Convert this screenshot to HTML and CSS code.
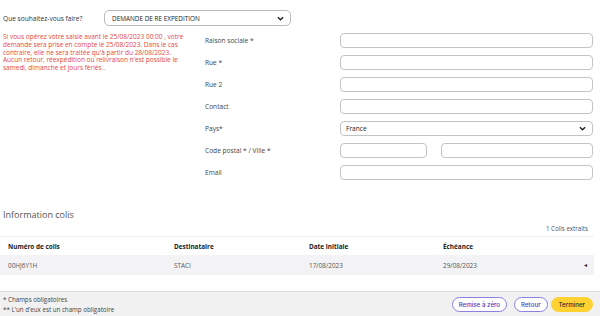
FILE: index.html
```html
<!DOCTYPE html>
<html lang="fr">
<head>
<meta charset="utf-8">
<link rel="stylesheet" href="styles.css">
</head>
<body>
<div class="page">
  <div class="top-row">
    <span class="top-label">Que souhaitez-vous faire?</span>
    <div class="select top-select">
      <span>DEMANDE DE RE EXPEDITION</span>
      <svg class="chev" viewBox="0 0 8 5" width="7" height="5"><polyline points="1,1 4,4 7,1" fill="none" stroke="#222" stroke-width="1.6"/></svg>
    </div>
  </div>
  <div class="main">
    <p class="notice">Si vous opérez votre saisie avant le 25/08/2023 00:00 , votre<br>demande sera prise en compte le 25/08/2023. Dans le cas<br>contraire, elle ne sera traitée qu'à partir du 28/08/2023.<br>Aucun retour, réexpédition ou relivraison n'est possible le<br>samedi, dimanche et jours fériés .</p>
    <div class="form">
      <label class="lbl">Raison sociale *</label><div class="input"></div>
      <label class="lbl">Rue *</label><div class="input"></div>
      <label class="lbl">Rue 2</label><div class="input"></div>
      <label class="lbl">Contact</label><div class="input"></div>
      <label class="lbl">Pays*</label>
      <div class="input select">
        <span>France</span>
        <svg class="chev" viewBox="0 0 8 5" width="7" height="5"><polyline points="1,1 4,4 7,1" fill="none" stroke="#222" stroke-width="1.6"/></svg>
      </div>
      <label class="lbl">Code postal * / Ville *</label>
      <div class="pair"><div class="input cp"></div><div class="input city"></div></div>
      <label class="lbl">Email</label><div class="input"></div>
    </div>
  </div>

  <h2 class="section-title">Information colis</h2>
  <div class="count">1 Colis extraits</div>
  <div class="table">
    <div class="tr th">
      <span>Numéro de colis</span><span>Destinataire</span><span>Date initiale</span><span>Échéance</span><span></span>
    </div>
    <div class="tr td">
      <span>00HJ6Y1H</span><span>STACI</span><span>17/08/2023</span><span>29/08/2023</span><span class="caret">◂</span>
    </div>
  </div>
</div>
<footer class="footer">
  <div class="notes">
    <div>* Champs obligatoires</div>
    <div>** L'un d'eux est un champ obligatoire</div>
  </div>
  <div class="actions">
    <button class="btn outline reset">Remise à zéro</button>
    <button class="btn outline back">Retour</button>
    <button class="btn primary">Terminer</button>
  </div>
</footer>
</body>
</html>
```
FILE: styles.css
```css
* { box-sizing: border-box; }
html, body { margin: 0; padding: 0; background: #fff; }
body {
  width: 600px;
  height: 316px;
  overflow: hidden;
  font-family: "Open Sans", "Liberation Sans", sans-serif;
  color: #444;
  display: flex;
  flex-direction: column;
}
.page { flex: 1; }

.top-row {
  display: flex;
  align-items: center;
  padding: 10px 0 0 3px;
  height: 26px;
}
.top-label { width: 101px; font-size: 6.6px; color: #333; }
.select {
  display: flex;
  align-items: center;
  justify-content: space-between;
  border: 1px solid #bbb;
  border-radius: 5px;
  padding: 0 6px 0 7px;
  font-size: 6.4px;
  color: #222;
}
.top-select { width: 187px; height: 16px; }
.chev { display: block; }

.main { display: flex; padding-top: 7px; }
.notice {
  margin: 0;
  width: 202px;
  flex: none;
  padding: 0 0 0 3px;
  font-size: 6.5px;
  line-height: 7.8px;
  white-space: nowrap;
  color: #e4483a;
}
.form {
  display: grid;
  grid-template-columns: 135px 253px;
  grid-auto-rows: 15px;
  row-gap: 7px;
  align-items: center;
  margin-left: 3px;
}
.lbl { font-size: 6.6px; color: #444; }
.input {
  height: 15px;
  border: 1px solid #c4c4c4;
  border-radius: 4px;
  background: #fff;
}
.form .select { padding-left: 5px; font-size: 6.6px; }
.pair { display: flex; gap: 14px; }
.cp { width: 87px; }
.city { flex: 1; }

.section-title {
  margin: 29px 0 0 3px;
  font-size: 9px;
  font-weight: 400;
  color: #555;
  line-height: 12px;
}
.count {
  text-align: right;
  padding-right: 12px;
  font-size: 6.2px;
  color: #555;
  margin-top: 3px;
  line-height: 9px;
}
.table { width: 594px; margin-top: 3px; }
.tr {
  display: grid;
  grid-template-columns: 166px 135px 134px 135px 1fr;
  align-items: center;
  padding-left: 8px;
  font-size: 6.4px;
}
.th {
  height: 19px;
  border-top: 1px solid #f0f0f2;
  font-weight: 700;
  color: #222;
}
.td { height: 20px; background: #f3f3f6; color: #555; }
.caret { text-align: right; padding-right: 7px; font-size: 6px; color: #222; }

.footer {
  height: 25px;
  background: #f1f1f1;
  border-top: 1px solid #ddd;
  display: flex;
  justify-content: space-between;
  align-items: center;
  padding: 0 7px 0 3px;
}
.notes { font-size: 6.2px; line-height: 9.8px; color: #444; padding-top: 2px; }
.actions { display: flex; gap: 3px; align-items: center; padding-top: 1px; }
.btn {
  font-family: "Inter", "Open Sans", sans-serif;
  font-size: 6.2px;
  height: 15px;
  border-radius: 8px;
  padding: 0 6px;
  line-height: 13px;
  cursor: pointer;
}
.outline {
  background: #fff;
  border: 1px solid #8c7fe3;
  color: #4b3db5;
  font-weight: 500;
}
.back { margin-left: 4px; }
.primary {
  background: #ffd232;
  border: 1px solid #ffd232;
  color: #2a2a2a;
  padding: 0 7px;
  font-weight: 500;
}
```
